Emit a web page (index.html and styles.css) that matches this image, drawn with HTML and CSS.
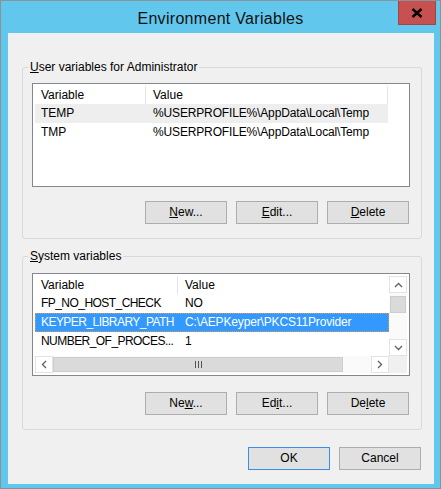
FILE: index.html
```html
<!DOCTYPE html>
<html>
<head>
<meta charset="utf-8">
<link rel="stylesheet" href="styles.css">
</head>
<body>
<div class="window">
  <div class="titlebar">
    <div class="title">Environment Variables</div>
    <div class="close">
      <svg width="12" height="10" viewBox="0 0 12 10"><path d="M1.5 1 L10.5 9 M10.5 1 L1.5 9" stroke="#000" stroke-width="2.4" fill="none"/></svg>
    </div>
  </div>
  <div class="client">
    <fieldset class="group g1">
      <legend><u>U</u>ser variables for Administrator</legend>
      <div class="list l1">
        <div class="hdr">
          <div class="c1">Variable</div>
          <div class="c2">Value</div>
        </div>
        <div class="row inactive">
          <div class="c1">TEMP</div>
          <div class="c2">%USERPROFILE%\AppData\Local\Temp</div>
        </div>
        <div class="row">
          <div class="c1">TMP</div>
          <div class="c2">%USERPROFILE%\AppData\Local\Temp</div>
        </div>
      </div>
      <div class="btns b1">
        <div class="btn"><u>N</u>ew...</div>
        <div class="btn"><u>E</u>dit...</div>
        <div class="btn"><u>D</u>elete</div>
      </div>
    </fieldset>

    <fieldset class="group g2">
      <legend><u>S</u>ystem variables</legend>
      <div class="list l2">
        <div class="content">
          <div class="hdr">
            <div class="c1">Variable</div>
            <div class="c2">Value</div>
          </div>
          <div class="row">
            <div class="c1">FP_NO_HOST_CHECK</div>
            <div class="c2">NO</div>
          </div>
          <div class="row selected">
            <div class="c1">KEYPER_LIBRARY_PATH</div>
            <div class="c2">C:\AEPKeyper\PKCS11Provider</div>
          </div>
          <div class="row">
            <div class="c1">NUMBER_OF_PROCES...</div>
            <div class="c2">1</div>
          </div>
        </div>
        <div class="vscroll">
          <div class="sbtn">
            <svg width="9" height="6" viewBox="0 0 9 6"><polyline points="1,5 4.5,1.5 8,5" fill="none" stroke="#606060" stroke-width="1.3"/></svg>
          </div>
          <div class="vtrack"><div class="vthumb"></div></div>
          <div class="sbtn">
            <svg width="9" height="6" viewBox="0 0 9 6"><polyline points="1,1 4.5,4.5 8,1" fill="none" stroke="#606060" stroke-width="1.3"/></svg>
          </div>
        </div>
        <div class="hscroll">
          <div class="sbtn">
            <svg width="6" height="9" viewBox="0 0 6 9"><polyline points="5,1 1.5,4.5 5,8" fill="none" stroke="#606060" stroke-width="1.3"/></svg>
          </div>
          <div class="htrack">
            <div class="hthumb">
              <svg width="7" height="7" viewBox="0 0 7 7"><rect x="0" y="0" width="1" height="7" fill="#555"/><rect x="3" y="0" width="1" height="7" fill="#555"/><rect x="6" y="0" width="1" height="7" fill="#555"/></svg>
            </div>
          </div>
          <div class="sbtn">
            <svg width="6" height="9" viewBox="0 0 6 9"><polyline points="1,1 4.5,4.5 1,8" fill="none" stroke="#606060" stroke-width="1.3"/></svg>
          </div>
        </div>
        <div class="corner"></div>
      </div>
      <div class="btns b2">
        <div class="btn">Ne<u>w</u>...</div>
        <div class="btn">Ed<u>i</u>t...</div>
        <div class="btn">De<u>l</u>ete</div>
      </div>
    </fieldset>

    <div class="footer">
      <div class="btn default">OK</div>
      <div class="btn">Cancel</div>
    </div>
  </div>
</div>
</body>
</html>
```

FILE: styles.css
```css
* {
  box-sizing: border-box;
}

html, body {
  margin: 0;
  padding: 0;
  background: #ffffff;
}

body {
  font-family: "Liberation Sans", Arial, sans-serif;
  font-size: 12px;
  color: #000;
}

.window {
  width: 441px;
  height: 489px;
  border: 1px solid #8c9296;
  background: #62c7ec;
  display: flex;
  flex-direction: column;
}

.titlebar {
  height: 32px;
  display: flex;
  align-items: flex-start;
  padding-left: 42px;
}

.title {
  flex: 1;
  text-align: center;
  font-size: 16px;
  letter-spacing: 0.3px;
  line-height: 20px;
  padding-top: 8px;
  color: #111;
}

.close {
  width: 38px;
  height: 24px;
  margin-right: 4px;
  background: #c75050;
  border: 1px solid #a54444;
  border-top: none;
  display: flex;
  align-items: center;
  justify-content: center;
}

.client {
  flex: 1;
  margin: 0 6px 4px 7px;
  background: #f0f0f0;
  display: flex;
  flex-direction: column;
}

.group {
  margin: 0 12px 0 14px;
  padding: 8px 11px 14px 9px;
  border: 1px solid #d9d9d9;
  border-radius: 3px;
  min-inline-size: 0;
}

.g1 {
  margin-top: 26px;
}

.g2 {
  margin-top: 9px;
  padding-top: 9px;
}

legend {
  padding: 0 2px;
  margin-left: -4px;
  line-height: 16px;
}

u {
  text-decoration: underline;
  text-underline-offset: 1px;
}

.list {
  background: #fff;
  border: 1px solid #828790;
  padding: 2px;
  height: 104px;
}

.hdr {
  display: flex;
  height: 18px;
  line-height: 18px;
  background: #fff;
}

.hdr > div {
  border-right: 1px solid #e5e5e5;
}

.row {
  display: flex;
  height: 19px;
  line-height: 19px;
  white-space: nowrap;
}

.c1 {
  padding-left: 6px;
  white-space: nowrap;
  overflow: hidden;
}

.c2 {
  padding-left: 7px;
  white-space: nowrap;
  overflow: hidden;
}

.l1 .c1 { width: 111px; }
.l1 .c2 { width: 242px; }

.l1 .row { width: 353px; }

.l1 .row .c2 {
  letter-spacing: -0.15px;
}

.row.inactive {
  background: #eeeeee;
}

.l2 {
  height: 103px;
  display: grid;
  grid-template-columns: 354px 18px;
  grid-template-rows: 80px 17px;
}

.l2 .content {
  overflow: hidden;
}

.l2 .c1 { width: 143px; }
.l2 .c2 { width: 211px; }

.l2 .row .c1 {
  letter-spacing: -0.55px;
}

.l2 .row .c2 {
  letter-spacing: -0.15px;
}

.l2 .hdr .c2 {
  border-right: none;
}

.row.selected {
  background: #3399ff;
  color: #fff;
  outline: 1px dotted #e09a4a;
  outline-offset: -1px;
}

.vscroll {
  display: flex;
  flex-direction: column;
  background: #fafafa;
}

.hscroll {
  display: flex;
  background: #fafafa;
}

.sbtn {
  flex: none;
  background: #fff;
  border: 1px solid #e3e3e3;
  display: flex;
  align-items: center;
  justify-content: center;
}

.vscroll .sbtn {
  height: 17px;
}

.hscroll .sbtn {
  width: 18px;
}

.vtrack {
  flex: 1;
  padding-top: 3px;
}

.vthumb {
  height: 17px;
  background: #dadada;
  border: 1px solid #cdcdcd;
  margin: 0 1px;
}

.htrack {
  flex: 1;
  display: flex;
}

.hthumb {
  width: 290px;
  background: #dadada;
  border: 1px solid #cdcdcd;
  margin: 1px 0;
  display: flex;
  align-items: center;
  justify-content: center;
}

.corner {
  background: #f0f0f0;
}

.btns {
  display: flex;
  justify-content: flex-end;
  gap: 9px;
  margin-right: 1px;
}

.b1 {
  margin-top: 14px;
}

.b2 {
  margin-top: 16px;
}

.btn {
  width: 82px;
  height: 23px;
  line-height: 21px;
  text-align: center;
  background: #e1e1e1;
  border: 1px solid #adadad;
}

.btn.default {
  border-color: #3a8ee6;
}

.footer {
  display: flex;
  justify-content: flex-end;
  gap: 9px;
  margin-top: 17px;
  margin-right: 13px;
}
```
